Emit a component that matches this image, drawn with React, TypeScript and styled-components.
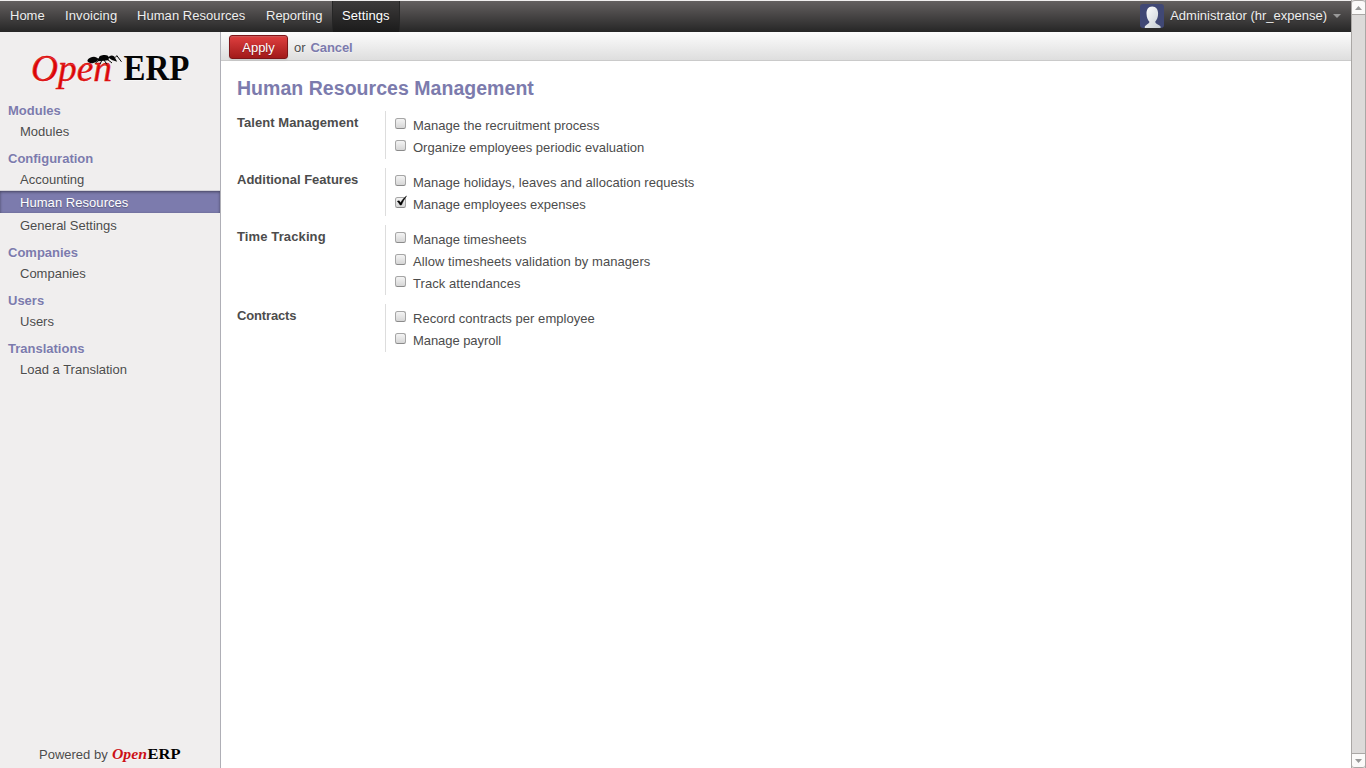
import React from "react";
import styled, { createGlobalStyle, css } from "styled-components";

const GlobalStyle = createGlobalStyle`
  * { box-sizing: border-box; }
  body { margin: 0; background: #fff; overflow: hidden; }
`;

const Shell = styled.div`
  display: flex;
  width: 1366px;
  height: 768px;
  font: 13px/16px "Liberation Sans", Arial, sans-serif;
  color: #4c4c4c;
  text-shadow: 0 1px 1px rgba(255, 255, 255, 0.5);
  overflow: hidden;
`;

const Client = styled.div`
  display: flex;
  flex-direction: column;
  width: 1351px;
  border-top: 1px solid #f0eeee;
`;

const TopBar = styled.nav`
  display: flex;
  justify-content: space-between;
  height: 31px;
  flex: none;
  background: linear-gradient(#646060, #262626);
  color: #eee;
  text-shadow: 0 1px 1px rgba(0, 0, 0, 0.2);
`;

const MenuList = styled.div`
  display: flex;
`;

const MenuItem = styled.a<{ $active?: boolean; $width: number; $tracking?: number }>`
  width: ${(p) => p.$width}px;
  padding: 7px 0 8px 10px;
  letter-spacing: ${(p) => p.$tracking ?? 0}px;
  white-space: nowrap;
  ${(p) =>
    p.$active &&
    css`
      background: linear-gradient(#3d3b3b, #1b1b1b);
      box-shadow: inset 1px 0 0 #262626, inset -1px 0 0 #262626;
      color: #fff;
    `}
`;

const UserMenu = styled.div`
  display: flex;
  align-items: center;
  padding: 0 10px 2px 0;
`;

const UserName = styled.span`
  margin: 0 6px;
  padding-top: 1px;
`;

const Caret = styled.span`
  border: 4px solid transparent;
  border-top-color: #999;
  border-bottom: 0;
`;

const Columns = styled.div`
  display: flex;
  flex: 1;
`;

const Sidebar = styled.aside`
  display: flex;
  flex-direction: column;
  width: 221px;
  border-right: 1px solid #afafb6;
  background: #f0eeee;
`;

const LogoArea = styled.div`
  height: 63px;
`;

const SectionTitle = styled.h2`
  height: 25px;
  margin: 0;
  padding: 8px 8px 0;
  font-size: 13px;
  line-height: 16px;
  color: #7c7bad;
`;

const SectionLink = styled.a<{ $active?: boolean }>`
  display: block;
  height: 23px;
  padding: 4px 20px 3px;
  ${(p) =>
    p.$active &&
    css`
      height: 22px;
      margin-bottom: 1px;
      background: #7c7bad;
      color: #fff;
      letter-spacing: 0.05px;
      text-shadow: 0 1px 1px rgba(0, 0, 0, 0.3);
      box-shadow: inset 0 1px 3px rgba(0, 0, 0, 0.45), 0 -1px 0 #d3d2d8;
    `}
`;

const Footer = styled.footer`
  display: flex;
  align-items: center;
  margin-top: auto;
  height: 27px;
  padding-left: 39px;
`;

const FooterLogo = styled.svg`
  margin: -1px 0 0 3px;
`;

const Main = styled.main`
  flex: 1;
`;

const ActionBar = styled.div`
  display: flex;
  align-items: center;
  height: 29px;
  padding: 1px 8px 0;
  border-bottom: 1px solid #cacaca;
  background: linear-gradient(#fcfcfc, #dedede);
`;

const ApplyButton = styled.button`
  width: 59px;
  height: 24px;
  padding: 2px 0 0;
  border: 1px solid #7d1518;
  border-radius: 3px;
  background: linear-gradient(#df3f3f, #a21a1a);
  box-shadow: 0 1px 2px rgba(0, 0, 0, 0.1), inset 0 1px 1px rgba(155, 155, 155, 0.3);
  color: #fff;
  font: 13px/16px "Liberation Sans", Arial, sans-serif;
  text-shadow: 0 1px 1px rgba(0, 0, 0, 0.3);
`;

const OrText = styled.span`
  margin: 0 5px 0 6px;
  padding-top: 2px;
`;

const CancelLink = styled.a`
  padding-top: 2px;
  font-weight: bold;
  letter-spacing: -0.1px;
  color: #7c7bad;
`;

const Form = styled.form`
  padding: 16px;
`;

const FormTitle = styled.h1`
  margin: 0;
  height: 34px;
  font-size: 19.5px;
  line-height: 23px;
  letter-spacing: 0.04px;
  color: #7c7bad;
`;

const Group = styled.section`
  display: flex;
  margin-bottom: 9px;
`;

const GroupLabel = styled.div<{ $tracking: number }>`
  width: 148px;
  padding-top: 4px;
  font-weight: bold;
  letter-spacing: ${(p) => p.$tracking}px;
`;

const Options = styled.div`
  padding: 4px 0 0 9px;
  border-left: 1px solid #ddd;
`;

const Option = styled.label`
  display: flex;
  align-items: flex-start;
  height: 22px;
`;

const CheckBox = styled.span`
  width: 11px;
  height: 11px;
  margin: 3px 7px 0 0;
  border: 1px solid #a6a6a6;
  border-bottom-color: #8b8b8b;
  border-radius: 2.5px;
  background: linear-gradient(#f4f4f4, #d6d6d6);

  svg {
    display: block;
    margin: -4px 0 0 -1px;
    overflow: visible;
  }
`;

const OptionText = styled.span<{ $tracking: number }>`
  padding-top: 3px;
  letter-spacing: ${(p) => p.$tracking}px;
`;

const ScrollBar = styled.div`
  display: flex;
  flex-direction: column;
  justify-content: space-between;
  width: 15px;
  border: solid #aaa7a5;
  border-width: 0 1px;
  background: #dcdad9;
`;

const ScrollButton = styled.div<{ $end?: boolean }>`
  display: flex;
  align-items: center;
  justify-content: center;
  height: 15px;
  background: #fbfaf9;
  border: 0 solid #aaa7a5;
  border-width: 1px 0;
  border-radius: ${(p) => (p.$end ? "0 0 3px 3px" : "3px 3px 0 0")};
`;

const Logo = () => (
  <svg width="220" height="63" viewBox="0 32 220 63" role="img" aria-label="OpenERP">
    <g fontFamily="'Liberation Serif', serif">
      <text x="31" y="80.5" fontSize="37" fontStyle="italic" fill="#dc0000" stroke="#dc0000" strokeWidth="0.4" textLength="81" lengthAdjust="spacingAndGlyphs">Open</text>
      <text x="123.5" y="80.3" fontSize="35" fontWeight="bold" fill="#050505" textLength="66" lengthAdjust="spacingAndGlyphs">ERP</text>
    </g>
    <g fill="#050505">
      <ellipse cx="92.7" cy="60" rx="5.4" ry="3" transform="rotate(-12 92.7 60)" />
      <ellipse cx="103.7" cy="57.7" rx="4.8" ry="2.6" transform="rotate(-6 103.7 57.7)" />
      <path d="M108.3 57.6 Q110.8 54 114.3 56.6 L117.2 61.8 Q111.5 60.8 108.3 57.6Z" />
      <path d="M97 58.5 L109 56.8 L108.5 60.3 L98 61.3Z" />
    </g>
    <path d="M99 60 L95.5 63 M102 60 L100 64 M104 60 L107 64.5 M107 59 L112 63 M115.4 57.5 L116.8 55.6 L121.5 61.8" fill="none" stroke="#050505" strokeWidth="1" />
  </svg>
);

const Avatar = () => (
  <svg width="24" height="24" viewBox="0 0 24 24" aria-hidden="true">
    <defs>
      <linearGradient id="face" x1="0" y1="0" x2="1" y2="1">
        <stop offset="0" stopColor="#fff" />
        <stop offset="1" stopColor="#c5ccd2" />
      </linearGradient>
    </defs>
    <rect width="24" height="24" rx="3" fill="#404875" />
    <path d="M12.2 2.5C8.2 2.5 6.4 5.6 6.5 9.8C6.6 13.8 8 16.4 9.4 17.7C9.4 19.8 6.4 20.2 4.8 22.6V24H20.6V22.6C19 20.2 15.4 20 15.2 17.7C17 15.9 18.1 12.8 18.1 9.5C18.1 5.4 16.2 2.5 12.2 2.5Z" fill="url(#face)" />
  </svg>
);

const menus = [
  { label: "Home", width: 55 },
  { label: "Invoicing", width: 72, tracking: 0.1 },
  { label: "Human Resources", width: 129, tracking: 0.05 },
  { label: "Reporting", width: 76 },
  { label: "Settings", width: 68, tracking: 0.08 },
];

const sections = [
  { title: "Modules", links: ["Modules"] },
  { title: "Configuration", links: ["Accounting", "Human Resources", "General Settings"] },
  { title: "Companies", links: ["Companies"] },
  { title: "Users", links: ["Users"] },
  { title: "Translations", links: ["Load a Translation"] },
];

const groups = [
  {
    label: "Talent Management",
    tracking: 0.06,
    options: [
      { text: "Manage the recruitment process" },
      { text: "Organize employees periodic evaluation" },
    ],
  },
  {
    label: "Additional Features",
    options: [
      { text: "Manage holidays, leaves and allocation requests", tracking: 0.02 },
      { text: "Manage employees expenses", checked: true },
    ],
  },
  {
    label: "Time Tracking",
    tracking: 0.12,
    options: [
      { text: "Manage timesheets" },
      { text: "Allow timesheets validation by managers", tracking: 0.065 },
      { text: "Track attendances", tracking: 0.06 },
    ],
  },
  {
    label: "Contracts",
    tracking: -0.15,
    options: [
      { text: "Record contracts per employee", tracking: 0.04 },
      { text: "Manage payroll", tracking: -0.06 },
    ],
  },
];

export default function App() {
  return (
    <>
      <GlobalStyle />
      <Shell>
        <Client>
          <TopBar>
            <MenuList>
              {menus.map((m) => (
                <MenuItem key={m.label} $width={m.width} $tracking={m.tracking} $active={m.label === "Settings"}>
                  {m.label}
                </MenuItem>
              ))}
            </MenuList>
            <UserMenu>
              <Avatar />
              <UserName>Administrator (hr_expense)</UserName>
              <Caret />
            </UserMenu>
          </TopBar>
          <Columns>
            <Sidebar>
              <LogoArea><Logo /></LogoArea>
              {sections.map((s) => (
                <React.Fragment key={s.title}>
                  <SectionTitle>{s.title}</SectionTitle>
                  {s.links.map((l) => (
                    <SectionLink key={l} $active={l === "Human Resources"}>{l}</SectionLink>
                  ))}
                </React.Fragment>
              ))}
              <Footer>
                <span>Powered by</span>
                <FooterLogo width="72" height="20" role="img" aria-label="OpenERP">
                  <g fontFamily="'Liberation Serif', serif" fontSize="15.5" fontWeight="bold">
                    <text x="1" y="15" fontStyle="italic" fill="#cc1016" textLength="35" lengthAdjust="spacingAndGlyphs">Open</text>
                    <text x="36.5" y="15" fill="#000" textLength="33" lengthAdjust="spacingAndGlyphs">ERP</text>
                  </g>
                </FooterLogo>
              </Footer>
            </Sidebar>
            <Main>
              <ActionBar>
                <ApplyButton>Apply</ApplyButton>
                <OrText>or</OrText>
                <CancelLink>Cancel</CancelLink>
              </ActionBar>
              <Form>
                <FormTitle>Human Resources Management</FormTitle>
                {groups.map((g) => (
                  <Group key={g.label}>
                    <GroupLabel $tracking={g.tracking ?? 0}>{g.label}</GroupLabel>
                    <Options>
                      {g.options.map((o: { text: string; tracking?: number; checked?: boolean }) => (
                        <Option key={o.text}>
                          <CheckBox role="checkbox" aria-checked={!!o.checked}>
                            {o.checked && (
                              <svg width="12" height="14" viewBox="0 0 12 14">
                                <path d="M2.3 7.3 L4.2 6.8 L5.5 8.8 Q7.5 5 11.5 2 Q8.3 6.5 6.4 11 L5.1 11 Q4 8.8 2.3 7.3Z" fill="#000" stroke="#000" strokeWidth="0.5" />
                              </svg>
                            )}
                          </CheckBox>
                          <OptionText $tracking={o.tracking ?? 0}>{o.text}</OptionText>
                        </Option>
                      ))}
                    </Options>
                  </Group>
                ))}
              </Form>
            </Main>
          </Columns>
        </Client>
        <ScrollBar>
          <ScrollButton>
            <svg width="7" height="4"><path d="M0 4L3.5 0L7 4Z" fill="#999" /></svg>
          </ScrollButton>
          <ScrollButton $end>
            <svg width="7" height="4"><path d="M0 0L3.5 4L7 0Z" fill="#999" /></svg>
          </ScrollButton>
        </ScrollBar>
      </Shell>
    </>
  );
}
